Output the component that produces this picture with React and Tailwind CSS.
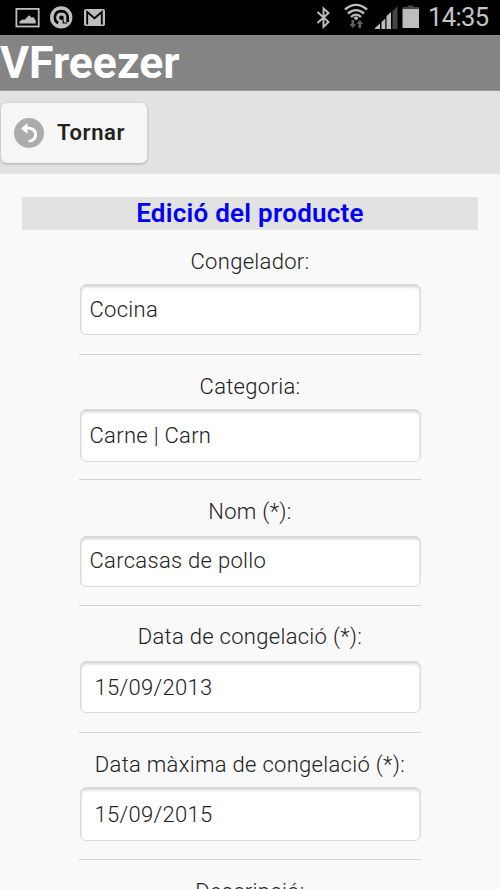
const fields = [
  { label: 'Congelador:', value: 'Cocina', section: 'h-[125px]', labelBox: 'h-[54px] pt-[16px]', box: 'h-[51px] pl-[9px]' },
  { label: 'Categoria:', value: 'Carne | Carn', section: 'h-[125px]', labelBox: 'h-[54px] pt-[16px]', box: 'h-[53px] pl-[9px]' },
  { label: 'Nom (*):', value: 'Carcasas de pollo', section: 'h-[126px]', labelBox: 'h-[56px] pt-[16px]', box: 'h-[51px] pl-[9px] pb-[2px]' },
  { label: 'Data de congelació (*):', value: '15/09/2013', section: 'h-[127px]', labelBox: 'h-[55px] pt-[15px]', box: 'h-[52px] pl-[14px]' },
  { label: 'Data màxima de congelació (*):', value: '15/09/2015', section: 'h-[127px]', labelBox: 'h-[54px] pt-[16px]', box: 'h-[54px] pl-[14px]' },
];

function StatusBar() {
  return (
    <div className="flex h-[35px] w-full shrink-0 bg-black">
      <svg width="500" height="35" viewBox="0 0 500 35" fill="none">
        <rect x="16.4" y="8.9" width="22.3" height="17.6" stroke="#bdbdbd" strokeWidth="1.8" />
        <path d="M19.500 23.500v-2l3-2 2 .2 4.500-4.500 3 2.500 1.200-1 2.600 4v2.800z" fill="#bdbdbd" />
        <circle cx="61.200" cy="17.400" r="11.200" fill="#bdbdbd" />
        <path d="M58.200 23.200C52.800 19.800 54.200 11.300 61.200 11.100c4.300 0 6.500 3 6.500 6.400v4.500" stroke="#000" strokeWidth="2.600" />
        <circle cx="61.500" cy="17.800" r="2.300" fill="#000" />
        <path d="M63.200 19.500v3.500h4" stroke="#000" strokeWidth="1.200" />
        <rect x="84" y="9" width="21" height="17" rx="1.800" fill="#bdbdbd" />
        <path d="M87.200 24.500V12l7.300 6.200 7.300-6.200v12.500" stroke="#000" strokeWidth="1.800" />
        <path d="M317.500 12l11 10-5 5V8.500l5 4.500-11 10" stroke="#bdbdbd" strokeWidth="1.900" />
        <path d="M345 9.500c7-6 15-6 22 0M348 13.500c5-4.500 11-4.500 16 0M351 17c3-3 7-3 10 0" stroke="#bdbdbd" strokeWidth="2.400" />
        <path d="M353.500 17.800a3.600 3.600 0 0 1 5 0L356 20.500z" fill="#bdbdbd" />
        <path d="M351.500 20h2.600v4h2l-3.300 4-3.300-4h2zM358.500 28v-4h-2l3.300-4 3.300 4h-2v4z" fill="#606060" />
        <path d="M375 29v-1l5-4.500V29zM381.500 29v-7l3.800-3.400V29zM386.500 29V16l4.500-4V29z" fill="#bdbdbd" />
        <path d="M392.500 29V11.200l5-5V29z" fill="#454545" />
        <path d="M402.500 9V7h5V5.500h6V7h5.500v2z" fill="#454545" />
        <rect x="402.500" y="9" width="16.500" height="19" fill="#bdbdbd" />
        <text x="428" y="26" fill="#c4c4c4" fontSize="25.500" textLength="61" lengthAdjust="spacing" className="font-['Roboto',sans-serif] font-normal">14:35</text>
      </svg>
    </div>
  );
}

function Field({ label, value, section, labelBox, box }) {
  return (
    <div className={`${section} flex w-[342px] shrink-0 flex-col border-b border-[#d0d0d0]`}>
      <label className={`${labelBox} block text-center whitespace-nowrap text-[22px] leading-[32px] tracking-[0.3px]`}>{label}</label>
      <div className={`${box} mx-[0.5px] flex items-center rounded-[6px] border border-[#dadada] bg-white text-[22px] tracking-[0.3px] shadow-[inset_0_2px_3px_#d2d2d2]`}>
        {value}
      </div>
    </div>
  );
}

export default function App() {
  return (
    <div className="flex h-[889px] w-[500px] flex-col overflow-hidden bg-[#f9f9f9] font-['Roboto',sans-serif] font-[350] text-[#222]">
      <StatusBar />
      <header className="flex h-[56px] shrink-0 items-center border-b border-[#979797] bg-[#848484]">
        <h1 className="text-[44.5px] leading-[56px] font-bold text-white">VFreezer</h1>
      </header>
      <div className="h-[83px] shrink-0 bg-[#e2e2e2] pt-[12px] pl-px">
        <button className="flex h-[60px] w-[146px] items-center rounded-[6px] bg-[#f6f6f6] pl-[13px] shadow-[0_1px_3px_#aaa]">
          <svg width="30" height="30" viewBox="0 0 30 30" fill="none">
            <circle cx="15" cy="15" r="15" fill="#acacac" />
            <path d="M7 10.500L13.500 5v3.600c12-.2 13.500 15 1 16.200v-2.600c8.500-1.800 7-10.700-1-10.700V16z" fill="#fff" />
          </svg>
          <span className="ml-[13px] pb-[2px] text-[22px] font-semibold tracking-[0.65px]">Tornar</span>
        </button>
      </div>
      <main className="flex flex-col items-center px-[22px] pt-[23px]">
        <h2 className="h-[33px] w-full shrink-0 bg-[#e2e2e2] text-center text-[26px] leading-[33px] font-semibold tracking-[0.25px] text-[#0000f6]">Edició del producte</h2>
        {fields.map((f) => (
          <Field key={f.label} {...f} />
        ))}
        <label className="block pt-[16px] text-[22px] leading-[32px] tracking-[0.3px]">Descripció:</label>
      </main>
    </div>
  );
}
